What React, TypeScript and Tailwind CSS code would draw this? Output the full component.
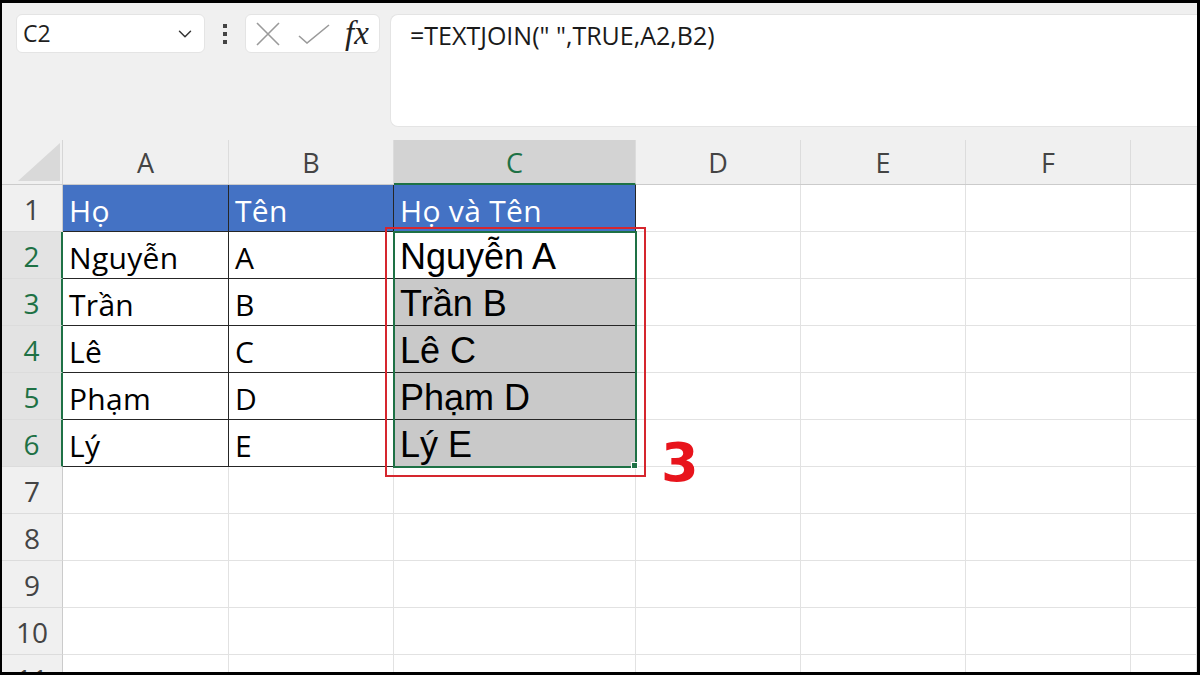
import { ChevronDown } from 'lucide-react'

const cols = [
  { key: 'A', w: 'w-[166px]' },
  { key: 'B', w: 'w-[165px]' },
  { key: 'C', w: 'w-[242px]' },
  { key: 'D', w: 'w-[165px]' },
  { key: 'E', w: 'w-[165px]' },
  { key: 'F', w: 'w-[165px]' },
  { key: 'G', w: 'flex-1' },
]

const data: string[][] = [
  ['Họ', 'Tên', 'Họ và Tên'],
  ['Nguyễn', 'A', 'Nguyễn A'],
  ['Trần', 'B', 'Trần B'],
  ['Lê', 'C', 'Lê C'],
  ['Phạm', 'D', 'Phạm D'],
  ['Lý', 'E', 'Lý E'],
]

function Cell({ row, col, w }: { row: number; col: number; w: string }) {
  const inData = row < 6 && col < 3
  const text = inData ? data[row][col] : ''
  const header = row === 0 && inData
  const gray = col === 2 && row >= 2 && row <= 5
  return (
    <div
      className={`${w} h-[47px] shrink-0 border-r border-b px-[6px] leading-[45px] whitespace-nowrap overflow-hidden ${
        inData ? 'border-[#262626]' : 'border-[#e2e2e2]'
      } ${header ? 'bg-[#4472c4] text-white' : gray ? 'bg-[#c9c9c9] text-black' : 'bg-white text-black'} ${
        col === 2 && row > 0
          ? "font-['Liberation_Sans',Arial,sans-serif] text-[36px] pt-[2px]"
          : "font-['Open_Sans',sans-serif] text-[30px] pt-[3px] tracking-[0.3px]"
      }`}
    >
      {text}
    </div>
  )
}

export default function App() {
  return (
    <div className="w-[1200px] h-[675px] bg-black pt-[3px] pl-[2px] pr-[3px] pb-[3px] overflow-hidden">
      <div className="w-full h-full bg-[#f0f0f0] overflow-hidden flex flex-col">
        {/* Toolbar */}
        <div className="h-[137px] shrink-0 flex items-start pt-[11px] pl-[14px]">
          <div className="w-[189px] h-[39px] bg-white rounded-[6px] border border-[#e4e4e4] flex items-center justify-between pl-[6px] pr-[8px]">
            <span className="font-['Open_Sans',sans-serif] text-[23px] text-[#1f1f1f]">C2</span>
            <ChevronDown className="w-[22px] h-[22px] text-[#333]" strokeWidth={1.6} />
          </div>
          <div className="w-[40px] h-[39px] flex flex-col items-center justify-center gap-[4px]">
            <span className="w-[4px] h-[4px] bg-[#444]" />
            <span className="w-[4px] h-[4px] bg-[#444]" />
            <span className="w-[4px] h-[4px] bg-[#444]" />
          </div>
          <div className="w-[135px] h-[39px] bg-white rounded-[6px] border border-[#e4e4e4] flex items-center pl-[9px]">
            <svg width="26" height="24" viewBox="0 0 26 24" fill="none" stroke="#9a9a9a" strokeWidth="1.6">
              <path d="M2 1 L24 23 M24 1 L2 23" />
            </svg>
            <svg width="32" height="20" viewBox="0 0 32 20" fill="none" stroke="#9a9a9a" strokeWidth="1.6" className="ml-[17px]">
              <path d="M1 12 L9 19 L31 1" />
            </svg>
            <span className="ml-[15px] font-['Liberation_Serif',serif] italic text-[33px] text-[#222] leading-none -mt-[1px]">fx</span>
          </div>
          <div className="ml-[10px] flex-1 h-[113px] bg-white rounded-l-[8px] border border-r-0 border-[#e4e4e4] pl-[19px] pt-[2px]">
            <span className="font-['Open_Sans',sans-serif] text-[25px] text-[#1a1a1a]">=TEXTJOIN(" ",TRUE,A2,B2)</span>
          </div>
        </div>

        {/* Sheet */}
        <div className="relative flex-1 flex flex-col">
          {/* Column headers */}
          <div className="flex h-[45px] shrink-0 border-b border-[#cbcbcb]">
            <div className="w-[61px] shrink-0 border-r border-[#d6d6d6] flex items-end justify-end pr-[2px] pb-[3px]">
              <svg width="42" height="38" viewBox="0 0 42 38">
                <polygon points="42,0 42,38 0,38" fill="#d9d9d9" />
              </svg>
            </div>
            {cols.map((c) => (
              <div
                key={c.key}
                className={`${c.w} shrink-0 border-r border-[#dcdcdc] text-center font-['Open_Sans',sans-serif] text-[27px] leading-[46px] ${
                  c.key === 'C' ? 'bg-[#d3d3d3] text-[#1e7145] border-b-2 border-b-[#1e7145] -mb-[1px]' : 'text-[#444]'
                }`}
              >
                {c.key !== 'G' ? c.key : ''}
              </div>
            ))}
          </div>

          {/* Rows */}
          {Array.from({ length: 11 }).map((_, r) => {
            const sel = r >= 1 && r <= 5
            return (
              <div key={r} className="flex shrink-0">
                <div
                  className={`w-[61px] h-[47px] shrink-0 border-b border-[#dcdcdc] text-center font-['Open_Sans',sans-serif] text-[28px] leading-[48px] ${
                    sel
                      ? 'bg-[#e3e3e3] text-[#1e7145] border-r-2 border-r-[#1e7145]'
                      : 'text-[#444] border-r border-r-[#cbcbcb]'
                  }`}
                >
                  {r + 1}
                </div>
                {cols.map((c, ci) => (
                  <Cell key={c.key} row={r} col={ci} w={c.w} />
                ))}
              </div>
            )
          })}

          {/* Selection C2:C6 */}
          <div className="absolute left-[391px] top-[91px] w-[244px] h-[237px] border-2 border-[#1e7145]" />
          <div className="absolute left-[629px] top-[322px] w-[7px] h-[7px] bg-[#1e7145] border border-white" />
          {/* Red highlight */}
          <div className="absolute left-[383px] top-[87px] w-[261px] h-[250px] border-2 border-[#d5262e]" />
          <div className="absolute left-[659px] top-[297px] font-['DejaVu_Sans',sans-serif] font-bold text-[54px] leading-[52px] text-[#e8141c]">
            3
          </div>
        </div>
      </div>
    </div>
  )
}
